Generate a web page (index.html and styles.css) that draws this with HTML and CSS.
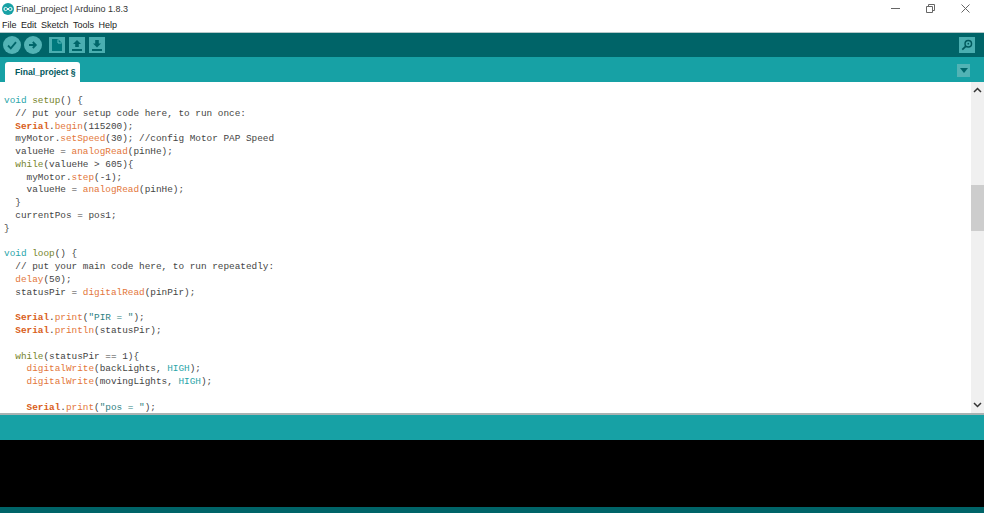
FILE: index.html
```html
<!DOCTYPE html>
<html lang="en">
<head>
<meta charset="utf-8">
<title>Final_project | Arduino 1.8.3</title>
<link rel="stylesheet" href="styles.css">
</head>
<body>
<div class="app">
  <header class="titlebar">
    <div class="title">
      <svg class="logo" width="12" height="12" viewBox="0 0 12 12"><circle cx="6" cy="6" r="6" fill="#17a1a5"/><path d="M3.600 4.400a1.600 1.600 0 1 0 0 3.200C5 7.600 7 4.400 8.400 4.400a1.600 1.600 0 1 1 0 3.200C7 7.600 5 4.400 3.600 4.400z" fill="none" stroke="#fff" stroke-width="1"/></svg>
      <span>Final_project | Arduino 1.8.3</span>
    </div>
    <div class="winctl">
      <svg width="9" height="9" viewBox="0 0 9 9"><path d="M0 4.500h9" stroke="#666" fill="none"/></svg>
      <svg width="9" height="9" viewBox="0 0 9 9"><path d="M.5 2.500h6v6h-6zM2.500 2.500v-2h6v6h-2" stroke="#666" fill="none"/></svg>
      <svg width="9" height="9" viewBox="0 0 9 9"><path d="M.5.5l8 8M8.500.5l-8 8" stroke="#666" fill="none"/></svg>
    </div>
  </header>
  <nav class="menubar"><span>File</span><span>Edit</span><span>Sketch</span><span>Tools</span><span>Help</span></nav>
  <div class="toolbar">
    <div class="tools">
      <button class="round"><svg width="12" height="12" viewBox="0 0 12 12"><path d="M2 6.500l2.800 2.800L10 3.200" fill="none" stroke="#00666a" stroke-width="1.800"/></svg></button>
      <button class="round second"><svg width="12" height="12" viewBox="0 0 12 12"><path d="M2 6h6.500M5.800 3L8.800 6 5.800 9" fill="none" stroke="#00666a" stroke-width="1.800"/></svg></button>
      <button class="square first"><svg width="10" height="12" viewBox="0 0 10 12"><path d="M0 0h6l4 4v8H0z" fill="#00797d"/><path d="M6 .5v3.500h3.500" fill="none" stroke="#5fbfc1"/></svg></button>
      <button class="square"><svg width="10" height="11" viewBox="0 0 10 11"><path d="M5 0l4 4H6.800v3H3.200V4H1zM0 9h10v2H0z" fill="#00666a"/></svg></button>
      <button class="square"><svg width="10" height="11" viewBox="0 0 10 11"><path d="M3.200 0h3.600v3.500H9L5 7.500 1 3.500h2.200zM0 9h10v2H0z" fill="#00666a"/></svg></button>
    </div>
    <button class="square serial"><svg width="12" height="12" viewBox="0 0 14 14"><circle cx="8.500" cy="5.500" r="3.800" fill="none" stroke="#00585c" stroke-width="1.700"/><circle cx="8.500" cy="5.500" r="1" fill="#00585c"/><path d="M5.500 8.500L1.500 12.500" stroke="#00585c" stroke-width="2"/></svg></button>
  </div>
  <div class="tabbar">
    <div class="tab">Final_project §</div>
    <button class="tabmenu"><svg width="8" height="5" viewBox="0 0 8 5"><path d="M0 0h8L4 5z" fill="#00666a"/></svg></button>
  </div>
  <main class="editor">
    <pre class="code"><span class="k">void</span> <span class="f">setup</span>() {
  // put your setup code here, to run once:
  <b>Serial</b>.<span class="o">begin</span>(115200);
  myMotor.<span class="o">setSpeed</span>(30); //config Motor PAP Speed
  valueHe = <span class="o">analogRead</span>(pinHe);
  <span class="f">while</span>(valueHe &gt; 605){
    myMotor.<span class="o">step</span>(-1);
    valueHe = <span class="o">analogRead</span>(pinHe);
  }
  currentPos = pos1;
}

<span class="k">void</span> <span class="f">loop</span>() {
  // put your main code here, to run repeatedly:
  <span class="o">delay</span>(50);
  statusPir = <span class="o">digitalRead</span>(pinPir);

  <b>Serial</b>.<span class="o">print</span>(<span class="s">"PIR = "</span>);
  <b>Serial</b>.<span class="o">println</span>(statusPir);

  <span class="f">while</span>(statusPir == 1){
    <span class="o">digitalWrite</span>(backLights, <span class="k">HIGH</span>);
    <span class="o">digitalWrite</span>(movingLights, <span class="k">HIGH</span>);

    <b>Serial</b>.<span class="o">print</span>(<span class="s">"pos = "</span>);</pre>
    <div class="scrollbar">
      <svg width="9" height="6" viewBox="0 0 9 6"><path d="M1 5l3.500-3.500L8 5" fill="none" stroke="#333" stroke-width="1.500"/></svg>
      <div class="track"><div class="thumb"></div></div>
      <svg width="9" height="6" viewBox="0 0 9 6"><path d="M1 1l3.500 3.500L8 1" fill="none" stroke="#333" stroke-width="1.500"/></svg>
    </div>
  </main>
  <div class="status"></div>
  <div class="console"></div>
  <div class="footer"></div>
</div>
</body>
</html>
```
FILE: styles.css
```css
* { box-sizing: border-box; }
html, body { margin: 0; height: 100%; }
body { background: #fff; font-family: "Liberation Sans", sans-serif; overflow: hidden; }
.app { display: flex; flex-direction: column; width: 984px; height: 513px; }
.titlebar { height: 17px; flex: none; display: flex; justify-content: space-between; align-items: center; padding: 0 0 0 2px; }
.title { display: flex; align-items: center; gap: 2px; font-size: 9px; color: #333; }
.logo { display: block; }
.winctl { display: flex; gap: 26px; padding-right: 14px; }
.winctl svg { display: block; }
.menubar { height: 15px; flex: none; display: flex; gap: 4.500px; padding-left: 2px; align-items: center; font-size: 9px; color: #222; }
.toolbar { height: 25px; flex: none; background: #006468; border-top: 1px solid #b5c8c9; display: flex; justify-content: space-between; align-items: center; padding: 0 9px 0 3px; }
.tools { display: flex; align-items: center; gap: 4px; }
button { border: 0; padding: 0; display: flex; align-items: center; justify-content: center; }
.round { width: 18px; height: 18px; border-radius: 50%; background: #52b3b5; }
.second { margin-left: -1px; }
.square { width: 16px; height: 16px; background: #4aaeb0; }
.first { margin-left: 3px; }
.serial svg { display: block; }
.tabbar { height: 25px; flex: none; background: #17a1a5; display: flex; justify-content: space-between; align-items: flex-end; padding: 0 14px 0 5px; }
.tab { width: 75px; height: 20px; background: #fff; border-radius: 3px 3px 0 0; font: bold 8.600px/20px "Liberation Sans", sans-serif; color: #00585c; padding-left: 10px; white-space: nowrap; }
.tabmenu { width: 13px; height: 13px; background: #52b3b5; margin-bottom: 5px; }
.editor { height: 333px; flex: none; position: relative; display: flex; justify-content: space-between; overflow: hidden; border-bottom: 2px solid #a9b2b2; }
.code { margin: 0; padding: 13px 0 0 4px; font: 9.400px/12.780px "Liberation Mono", monospace; color: #444; overflow: hidden; }
.code b { color: #d9601a; font-weight: bold; }
.k { color: #2aa5a9; }
.f { color: #75832a; }
.o { color: #e3763a; }
.s { color: #2f7f82; }
.scrollbar { width: 13px; background: #f0f0f0; flex: none; display: flex; flex-direction: column; align-items: center; justify-content: space-between; padding: 5px 0 5px; }
.track { flex: 1; width: 100%; padding-top: 92px; }
.thumb { height: 46px; background: #cdcdcd; }
.status { height: 25px; flex: none; background: #17a1a5; }
.console { flex: 1; background: #000; }
.footer { height: 6px; flex: none; background: #006468; }
```
